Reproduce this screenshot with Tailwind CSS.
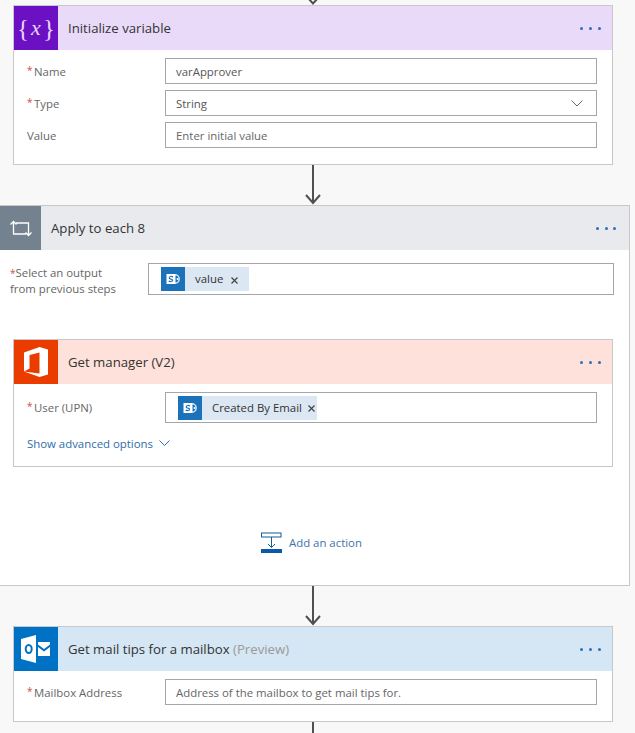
<!DOCTYPE html>
<html>
<head>
<meta charset="utf-8">
<script src="https://cdn.jsdelivr.net/npm/@tailwindcss/browser@4"></script>
</head>
<body class="m-0">
<div class="w-[635px] h-[733px] overflow-hidden bg-[#f8f8f8] flex flex-col font-['Open_Sans','Noto_Sans',sans-serif] text-[11.4px] text-[#666666]">

  <div class="h-[5px] shrink-0 flex justify-center w-[626px]">
    <svg width="20" height="5" viewBox="0 0 20 5" fill="none" stroke="#505050" stroke-width="2"><path d="M4 -3L10 3.5L16 -3"/></svg>
  </div>

  <!-- Initialize variable -->
  <section class="ml-[13px] w-[600px] h-[160px] shrink-0 border border-[#c8c8c8] bg-white">
    <header class="h-[44px] flex items-center bg-[#e9daf9]">
      <div class="w-[44px] h-[44px] bg-[#6c10c4] flex items-center justify-center text-[#e6d4fa] font-['Liberation_Serif',serif] text-[25px] italic leading-none shrink-0"><span class="not-italic font-light">{</span><span class="mx-[2px] text-[22px]">x</span><span class="not-italic font-light">}</span></div>
      <h2 class="ml-[10px] pt-[2px] text-[13.2px] text-[#333333] font-normal">Initialize variable</h2>
      <div class="ml-auto mr-[11px] mt-[1px] flex gap-[6px]">
        <i class="block w-[3px] h-[3px] rounded-full bg-[#2f6db5]"></i><i class="block w-[3px] h-[3px] rounded-full bg-[#2f6db5]"></i><i class="block w-[3px] h-[3px] rounded-full bg-[#2f6db5]"></i>
      </div>
    </header>
    <div class="pt-[8px] pl-[13px] pr-[15px] flex flex-col gap-[6px]">
      <div class="flex items-center h-[26px]">
        <label class="w-[138px] pt-[2px] flex"><span class="w-[7px] text-[#c9504a] text-[10px]">*</span>Name</label>
        <div class="flex-1 h-[26px] border border-[#a6a6a6] flex items-center pt-[2px] pl-[10px] text-[#555555]">varApprover</div>
      </div>
      <div class="flex items-center h-[26px]">
        <label class="w-[138px] pt-[2px] flex"><span class="w-[7px] text-[#c9504a] text-[10px]">*</span>Type</label>
        <div class="flex-1 h-[26px] border border-[#a6a6a6] flex items-center pt-[2px] pl-[10px] pr-[13px] text-[#555555]">String
          <svg class="ml-auto -mt-[2px]" width="12" height="7" viewBox="0 0 12 7" fill="none" stroke="#666666"><path d="M0.5 0.5L6 6L11.5 0.5"/></svg>
        </div>
      </div>
      <div class="flex items-center h-[26px]">
        <label class="w-[138px] pt-[2px]">Value</label>
        <div class="flex-1 h-[26px] border border-[#a6a6a6] flex items-center pt-[2px] pl-[10px] text-[#666666]">Enter initial value</div>
      </div>
    </div>
  </section>

  <div class="h-[40px] shrink-0 flex justify-center w-[626px]">
    <svg width="20" height="40" viewBox="0 0 20 40" fill="none" stroke="#505050" stroke-width="2"><path d="M10 0V38M3 30L10 38L17 30"/></svg>
  </div>

  <!-- Apply to each -->
  <section class="-ml-px w-[631px] h-[381px] shrink-0 border border-[#c8c8c8] bg-white">
    <header class="h-[44px] flex items-center bg-[#e8eaed]">
      <div class="w-[41px] h-[44px] bg-[#74828f] flex items-center justify-center shrink-0">
        <svg width="22" height="17" viewBox="0 0 22 17" fill="none" stroke="#ffffff" stroke-width="1.3"><path d="M3.5 14.5V1.5M0.5 4.5L3.5 1.5L6.5 4.5M6 3H18.5V15.5M15.5 12.5L18.5 15.5L21.5 12.5M16 14H3"/></svg>
      </div>
      <h2 class="ml-[10px] pt-[2px] text-[13.2px] text-[#333333] font-normal">Apply to each 8</h2>
      <div class="ml-auto mr-[13px] mt-[1px] flex gap-[5.5px]">
        <i class="block w-[3px] h-[3px] rounded-full bg-[#2f6db5]"></i><i class="block w-[3px] h-[3px] rounded-full bg-[#2f6db5]"></i><i class="block w-[3px] h-[3px] rounded-full bg-[#2f6db5]"></i>
      </div>
    </header>
    <div class="mt-[13px] h-[32px] pl-[9px] flex items-center">
      <label class="w-[139px] pl-px pt-[2px] leading-[15px]"><span class="text-[#c9504a] text-[10px]">*</span>Select an output<br>from previous steps</label>
      <div class="w-[466px] h-[32px] border border-[#a6a6a6] flex items-center pl-[12px]">
        <div class="h-[24px] flex items-center bg-[#dce7f4] text-[#333333]">
          <div class="w-[24px] h-[24px] bg-[#1c72b8] flex items-center justify-center">
            <svg width="15" height="12" viewBox="0 0 15 12"><path d="M9 1.8A4.2 4.2 0 1 1 9 10.2" fill="none" stroke="#cfe4f5" stroke-width="1.5"/><circle cx="11.5" cy="6" r="1" fill="#ffffff"/><rect x="0.5" y="1" width="9" height="10" fill="#ffffff"/><path d="M7 3.9C6 3.2 3.2 3.2 3.2 4.9C3.2 6.5 6.6 5.6 6.6 7.2C6.6 8.8 3.7 8.8 2.7 8.1" fill="none" stroke="#1c72b8" stroke-width="1.2"/></svg>
          </div>
          <span class="ml-[10px]">value</span>
          <svg class="ml-[8px] mr-[11px] mt-[2px]" width="7" height="7" viewBox="0 0 7 7" stroke="#444444" stroke-width="1.2"><path d="M0.5 0.5L6.5 6.5M6.5 0.5L0.5 6.5"/></svg>
        </div>
      </div>
    </div>

    <!-- Get manager -->
    <section class="mt-[44px] ml-[13px] w-[600px] h-[128px] border border-[#c8c8c8] bg-white">
      <header class="h-[44px] flex items-center bg-[#fde1da]">
        <div class="w-[44px] h-[44px] bg-[#eb3c00] flex items-center justify-center shrink-0">
          <svg width="26" height="30" viewBox="0 0 26 30"><path d="M1 5.5L16.5 0L25 2.5V27.5L16.5 30L1 24.5L16.5 26.5V5.5L6.5 8V21.5L1 24.5Z" fill="#ffffff"/></svg>
        </div>
        <h2 class="ml-[10px] pt-[2px] text-[13.2px] text-[#333333] font-normal">Get manager (V2)</h2>
        <div class="ml-auto mr-[11px] mt-[1px] flex gap-[6px]">
          <i class="block w-[3px] h-[3px] rounded-full bg-[#2f6db5]"></i><i class="block w-[3px] h-[3px] rounded-full bg-[#2f6db5]"></i><i class="block w-[3px] h-[3px] rounded-full bg-[#2f6db5]"></i>
        </div>
      </header>
      <div class="pt-[8px] pl-[13px] pr-[15px]">
        <div class="flex items-center h-[31px]">
          <label class="w-[138px] flex"><span class="w-[7px] text-[#c9504a] text-[10px]">*</span>User (UPN)</label>
          <div class="flex-1 h-[31px] border border-[#a6a6a6] flex items-center pl-[12px]">
            <div class="h-[24px] flex items-center bg-[#dce7f4] text-[#333333]">
              <div class="w-[24px] h-[24px] bg-[#1c72b8] flex items-center justify-center">
                <svg width="15" height="12" viewBox="0 0 15 12"><path d="M9 1.8A4.2 4.2 0 1 1 9 10.2" fill="none" stroke="#cfe4f5" stroke-width="1.5"/><circle cx="11.5" cy="6" r="1" fill="#ffffff"/><rect x="0.5" y="1" width="9" height="10" fill="#ffffff"/><path d="M7 3.9C6 3.2 3.2 3.2 3.2 4.9C3.2 6.5 6.6 5.6 6.6 7.2C6.6 8.8 3.7 8.8 2.7 8.1" fill="none" stroke="#1c72b8" stroke-width="1.2"/></svg>
              </div>
              <span class="ml-[10px]">Created By Email</span>
              <svg class="ml-[6px] mr-[2px] mt-[2px]" width="7" height="7" viewBox="0 0 7 7" stroke="#444444" stroke-width="1.2"><path d="M0.5 0.5L6.5 6.5M6.5 0.5L0.5 6.5"/></svg>
            </div>
          </div>
        </div>
        <div class="mt-[12px] flex items-center text-[#2e6da8]">Show advanced options
          <svg class="ml-[6px] -mt-[2px]" width="11" height="6" viewBox="0 0 11 6" fill="none" stroke="#2e6da8"><path d="M0.5 0.5L5.5 5.5L10.5 0.5"/></svg>
        </div>
      </div>
    </section>

    <div class="mt-[65px] pl-[261px] flex items-center gap-[7px] text-[#3d74a8]">
      <svg width="21" height="21" viewBox="0 0 21 21" fill="none"><rect x="0.5" y="1" width="19.5" height="4" stroke="#0f5f96"/><path d="M10.5 5V15M7 12L10.5 15.5L14 12" stroke="#0f5f96"/><rect x="0" y="17" width="21" height="4" fill="#0a5aa5"/></svg>
      <span>Add an action</span>
    </div>
  </section>

  <div class="h-[40px] shrink-0 flex justify-center w-[626px]">
    <svg width="20" height="40" viewBox="0 0 20 40" fill="none" stroke="#505050" stroke-width="2"><path d="M10 0V38M3 30L10 38L17 30"/></svg>
  </div>

  <!-- Get mail tips -->
  <section class="ml-[13px] w-[600px] h-[96px] shrink-0 border border-[#c8c8c8] bg-white">
    <header class="h-[44px] flex items-center bg-[#d5e6f4]">
      <div class="w-[44px] h-[44px] bg-[#0072c6] flex items-center justify-center shrink-0">
        <svg width="30" height="28" viewBox="0 0 30 28"><path d="M0 4L15 0V28L0 24Z" fill="#ffffff"/><ellipse cx="7.7" cy="14" rx="3" ry="4" fill="none" stroke="#0072c6" stroke-width="2"/><path d="M17 7H29V9.5L23 14L17 9.5ZM17 12L23 16.5L29 12V21H17Z" fill="#ffffff"/></svg>
      </div>
      <h2 class="ml-[10px] pt-[2px] text-[13.2px] text-[#333333] font-normal">Get mail tips for a mailbox <span class="text-[#9a9a9a]">(Preview)</span></h2>
      <div class="ml-auto mr-[11px] mt-[1px] flex gap-[6px]">
        <i class="block w-[3px] h-[3px] rounded-full bg-[#2f6db5]"></i><i class="block w-[3px] h-[3px] rounded-full bg-[#2f6db5]"></i><i class="block w-[3px] h-[3px] rounded-full bg-[#2f6db5]"></i>
      </div>
    </header>
    <div class="pt-[8px] pl-[13px] pr-[15px]">
      <div class="flex items-center h-[26px]">
        <label class="w-[138px] pt-[2px] flex"><span class="w-[7px] text-[#c9504a] text-[10px]">*</span>Mailbox Address</label>
        <div class="flex-1 h-[26px] border border-[#a6a6a6] flex items-center pl-[10px] pt-[2px]">Address of the mailbox to get mail tips for.</div>
      </div>
    </div>
  </section>

  <div class="h-[12px] shrink-0 flex justify-center w-[626px]">
    <svg width="20" height="12" viewBox="0 0 20 12" fill="none" stroke="#505050" stroke-width="2"><path d="M10 0V12"/></svg>
  </div>
</div>
</body>
</html>
